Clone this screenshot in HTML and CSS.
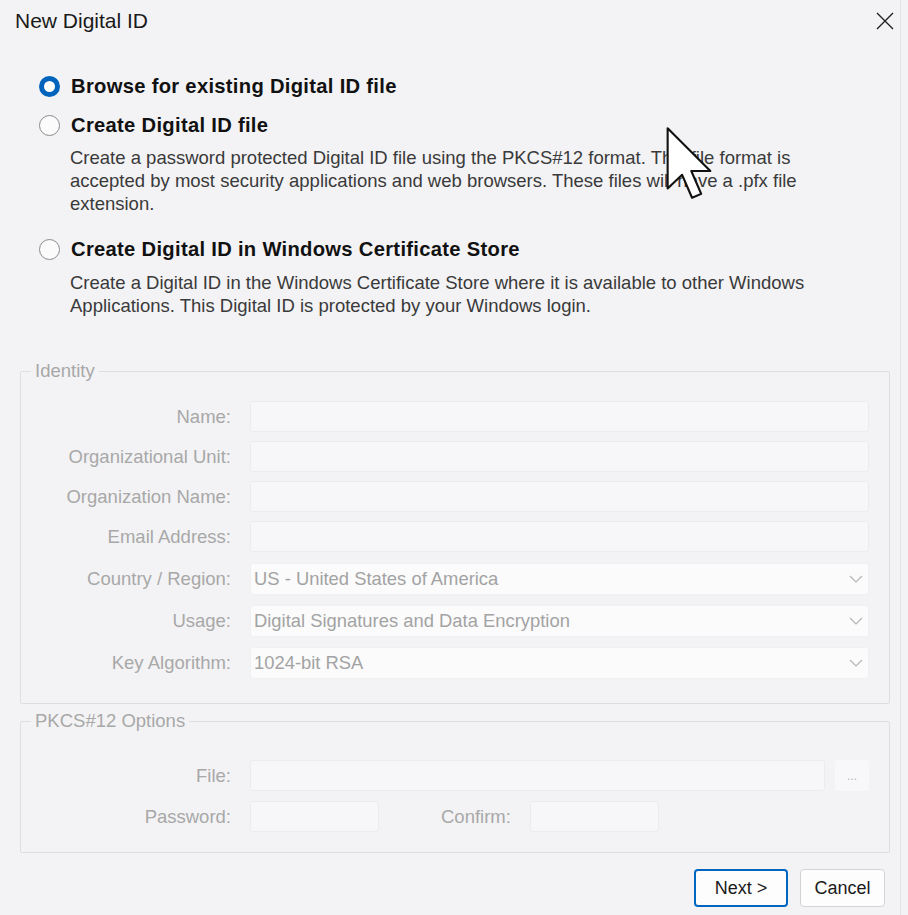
FILE: index.html
```html
<!DOCTYPE html>
<html>
<head>
<meta charset="utf-8">
<title>New Digital ID</title>
<link rel="stylesheet" href="styles.css">
</head>
<body>
<div class="dialog">
  <div class="titlebar">
    <span class="title">New Digital ID</span>
    <svg class="close" width="18" height="18" viewBox="0 0 18 18"><path d="M1 1 L17 17 M17 1 L1 17" stroke="#222" stroke-width="1.4" fill="none"/></svg>
  </div>

  <div class="options">
    <div class="option">
      <span class="radio checked"></span>
      <span class="opt-label">Browse for existing Digital ID file</span>
    </div>
    <div class="option">
      <span class="radio"></span>
      <span class="opt-label">Create Digital ID file</span>
    </div>
    <p class="desc">Create a password protected Digital ID file using the PKCS#12 format. This file format is<br>accepted by most security applications and web browsers. These files will have a .pfx file<br>extension.</p>
    <div class="option opt3">
      <span class="radio"></span>
      <span class="opt-label">Create Digital ID in Windows Certificate Store</span>
    </div>
    <p class="desc">Create a Digital ID in the Windows Certificate Store where it is available to other Windows<br>Applications. This Digital ID is protected by your Windows login.</p>
  </div>

  <fieldset class="group identity">
    <legend>Identity</legend>
    <div class="grid">
      <label>Name:</label><div class="field"></div>
      <label>Organizational Unit:</label><div class="field"></div>
      <label>Organization Name:</label><div class="field"></div>
      <label>Email Address:</label><div class="field"></div>
      <label class="c1">Country / Region:</label><div class="field combo c1"><span>US - United States of America</span><svg width="14" height="8" viewBox="0 0 14 8"><path d="M1 1 L7 7 L13 1" stroke="#b5b5b5" stroke-width="1.2" fill="none"/></svg></div>
      <label class="c2">Usage:</label><div class="field combo c2"><span>Digital Signatures and Data Encryption</span><svg width="14" height="8" viewBox="0 0 14 8"><path d="M1 1 L7 7 L13 1" stroke="#b5b5b5" stroke-width="1.2" fill="none"/></svg></div>
      <label class="c2">Key Algorithm:</label><div class="field combo c2"><span>1024-bit RSA</span><svg width="14" height="8" viewBox="0 0 14 8"><path d="M1 1 L7 7 L13 1" stroke="#b5b5b5" stroke-width="1.2" fill="none"/></svg></div>
    </div>
  </fieldset>

  <fieldset class="group pkcs">
    <legend>PKCS#12 Options</legend>
    <div class="file-row">
      <label>File:</label>
      <div class="field file"></div>
      <div class="browse">...</div>
    </div>
    <div class="pw-row">
      <label>Password:</label>
      <div class="field pw"></div>
      <label class="confirm">Confirm:</label>
      <div class="field pw"></div>
    </div>
  </fieldset>

  <div class="buttons">
    <button class="btn primary">Next &gt;</button>
    <button class="btn">Cancel</button>
  </div>

  <svg class="cursor" width="48" height="74" viewBox="0 0 12.4 19.4">
    <path d="M0.6 0.6 L0.6 16.4 L4.4 12.8 L7 18.8 L9.4 17.8 L6.8 11.8 L11.8 11.8 Z" fill="#fff" stroke="#111" stroke-width="0.55" stroke-linejoin="round"/>
  </svg>
</div>
</body>
</html>
```
FILE: styles.css
```css
html, body {
  margin: 0;
  padding: 0;
}
body {
  background: #f3f3f5;
  font-family: "Liberation Sans", Arial, sans-serif;
  color: #333;
}
.dialog {
  position: relative;
  width: 901px;
  height: 915px;
  border-right: 1px solid #e4e4e8;
  box-sizing: border-box;
}
.titlebar {
  height: 42px;
  display: flex;
  align-items: center;
  justify-content: space-between;
  padding: 0 6px 0 15px;
}
.title {
  font-size: 21px;
  color: #1a1a1a;
}
.close {
  display: block;
}
.options {
  padding: 32px 0 0 39px;
}
.option {
  display: flex;
  align-items: center;
  height: 24px;
  margin-bottom: 15px;
}
.option.opt3 {
  margin-top: 22px;
  margin-bottom: 16px;
}
.radio {
  width: 21px;
  height: 21px;
  box-sizing: border-box;
  border-radius: 50%;
  border: 1.5px solid #8a8a8a;
  background: #fbfbfb;
  margin-right: 11px;
  flex: none;
}
.radio.checked {
  border: 5.5px solid #0064bd;
  background: #fff;
}
.opt-label {
  font-weight: bold;
  font-size: 20.2px;
  color: #111;
  letter-spacing: 0.3px;
}
.desc {
  margin: -6px 0 0 31px;
  font-size: 18.5px;
  line-height: 23px;
  color: #3a3a3a;
  white-space: nowrap;
}
.group {
  margin: 0 10px 0 20px;
  border: 1px solid #dedee2;
  border-radius: 2px;
  padding: 0;
  min-width: 0;
}
.group legend {
  margin-left: 10px;
  padding: 0 4px 0 4px;
  font-size: 18.5px;
  color: #a8a8a8;
}
.identity {
  margin-top: 43px;
  padding: 19px 20px 24px 0;
}
.grid {
  display: grid;
  grid-template-columns: 210px 1fr;
  column-gap: 19px;
  row-gap: 9px;
  align-items: center;
}
.grid .c1 {
  margin-top: 2px;
}
.grid .c2 {
  margin-top: 1px;
}
label {
  font-size: 18.5px;
  color: #a8a8a8;
  text-align: right;
}
.field {
  height: 31px;
  box-sizing: border-box;
  background: #f7f7f9;
  border: 1px solid #ececef;
  border-radius: 3px;
}
.combo {
  height: 32px;
  background: #fbfbfc;
  border-color: #f0f0f2;
  display: flex;
  align-items: center;
  justify-content: space-between;
  padding: 0 5px 0 3px;
  font-size: 18.4px;
  color: #a3a3a3;
}
.combo svg {
  display: block;
}
.pkcs {
  margin-top: 6px;
  padding: 28px 20px 22px 0;
  height: 143px;
  box-sizing: border-box;
}
.file-row, .pw-row {
  display: flex;
  align-items: center;
}
.file-row label, .pw-row label {
  width: 210px;
  flex: none;
}
.file-row .field {
  margin-left: 19px;
  flex: 1;
}
.browse {
  width: 34px;
  height: 31px;
  margin-left: 10px;
  background: #f8f8fa;
  border-radius: 3px;
  color: #b5b5b5;
  font-size: 12px;
  display: flex;
  align-items: center;
  justify-content: center;
}
.pw-row {
  margin-top: 10px;
}
.pw-row .field.pw {
  width: 129px;
  margin-left: 19px;
  flex: none;
}
.pw-row label.confirm {
  width: auto;
  margin-left: 62px;
  margin-right: 0;
}
.buttons {
  display: flex;
  justify-content: flex-end;
  gap: 12px;
  margin: 16px 15px 0 0;
}
.btn {
  height: 38px;
  box-sizing: border-box;
  border: 1px solid #d3d3d6;
  border-radius: 4px;
  background: #fdfdfd;
  font-family: "Liberation Sans", Arial, sans-serif;
  font-size: 18px;
  color: #1a1a1a;
  padding: 0;
  width: 85px;
}
.btn.primary {
  border: 2px solid #0067c0;
  width: 94px;
}
.cursor {
  position: absolute;
  left: 665px;
  top: 126px;
}
```
